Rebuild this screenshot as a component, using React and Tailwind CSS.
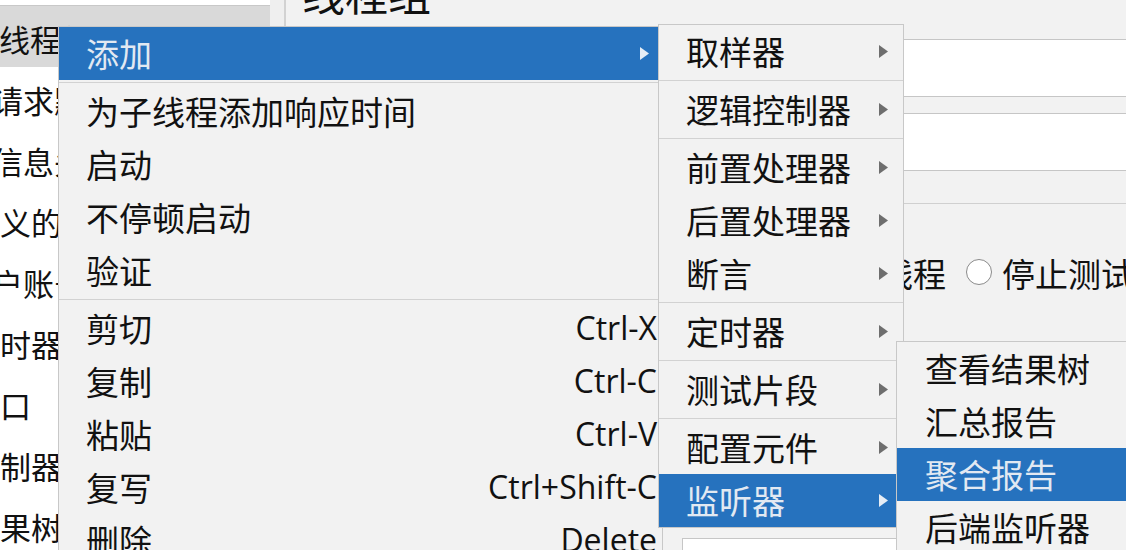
import React from "react";

const CJK = "font-['Noto_Sans_CJK_SC','Noto_Sans',sans-serif]";
const LAT = "font-['Open_Sans','Noto_Sans',sans-serif]";

function Arrow({ light }) {
  return (
    <svg width="9" height="13" viewBox="0 0 9 13" className="shrink-0">
      <polygon points="0,0 9,6.5 0,13" fill={light ? "#e6edf5" : "#6e6e6e"} />
    </svg>
  );
}

function Sep() {
  return (
    <div className="h-[5px] shrink-0 flex flex-col justify-center">
      <div className="h-px bg-[#d2d2d2]" />
    </div>
  );
}

function Row({ label, hl, arrow, shortcut, pl = "pl-[27px]", pr = "pr-[15px]" }) {
  return (
    <div
      className={`h-[53px] shrink-0 flex items-center justify-between ${pl} ${pr} ${
        hl ? "bg-[#2672be] text-[#e2e9f2]" : "text-[#111111]"
      }`}
    >
      <span className={`${CJK} text-[33px] leading-none whitespace-nowrap`}>{label}</span>
      {arrow && <Arrow light={hl} />}
      {shortcut && (
        <span className={`${LAT} text-[32px] leading-none whitespace-nowrap pb-[2px]`}>{shortcut}</span>
      )}
    </div>
  );
}

function TreeRow({ text, offset, selected }) {
  return (
    <div
      className={`h-[61px] shrink-0 flex items-center overflow-hidden ${
        selected ? "bg-[#d9d9d9]" : ""
      }`}
    >
      <span className={`${CJK} text-[31px] leading-none pt-[4px] whitespace-nowrap text-[#111111] ${offset}`}>
        {text}
      </span>
    </div>
  );
}

function Radio() {
  return <span className="w-[26px] h-[26px] rounded-full border-[1.5px] border-[#8a8a8a] bg-white shrink-0" />;
}

export default function App() {
  return (
    <div className="relative w-[1126px] h-[550px] overflow-hidden bg-[#f2f2f2]">
      {/* background window */}
      <div className="flex w-full h-full">
        {/* tree */}
        <div className="w-[270px] shrink-0 bg-white flex flex-col overflow-hidden">
          <div className="h-[5px] shrink-0" />
          <div className="h-px shrink-0 bg-[#c8c8c8]" />
          <TreeRow text="线程组" offset="ml-[-1px]" selected />
          <TreeRow text="请求默认值" offset="ml-[-8px]" />
          <TreeRow text="信息头管理器" offset="ml-[-8px]" />
          <TreeRow text="用户定义的变量" offset="ml-[-93px]" />
          <TreeRow text="用户账号" offset="ml-[-39px]" />
          <TreeRow text="固定定时器" offset="ml-[-93px]" />
          <TreeRow text="登录接口" offset="ml-[-93px]" />
          <TreeRow text="循环控制器" offset="ml-[-93px]" />
          <TreeRow text="查看结果树" offset="ml-[-93px]" />
        </div>
        {/* divider */}
        <div className="w-[14px] shrink-0 bg-[#efefef]" />
        <div className="w-[2px] shrink-0 bg-[#d2d2d2]" />
        {/* right panel */}
        <div className="flex-1 flex flex-col overflow-hidden bg-[#f2f2f2]">
          <div className={`${CJK} shrink-0 text-[43px] leading-[43px] h-[43px] mt-[-29px] ml-[16px] text-[#111111] whitespace-nowrap`}>
            线程组
          </div>
          <div className="shrink-0 mt-[25px] ml-[100px] h-[58px] w-[900px] bg-white border border-[#c6c6c6]" />
          <div className="shrink-0 mt-[16px] ml-[100px] h-[58px] w-[900px] bg-white border border-[#c6c6c6]" />
          <div className="shrink-0 mt-[32px] h-px w-full bg-[#d0d0d0]" />
          <div className={`shrink-0 mt-[48px] ml-[492px] h-[40px] flex items-center gap-[20px] ${CJK} text-[33px] leading-none text-[#111111] whitespace-nowrap`}>
            <div className="flex items-center gap-[10px]">
              <Radio />
              <span className="pt-[2px]">停止线程</span>
            </div>
            <div className="flex items-center gap-[10px]">
              <Radio />
              <span className="pt-[2px]">停止测试</span>
            </div>
            <div className="flex items-center gap-[10px]">
              <Radio />
              <span className="pt-[2px]">立即停止测试</span>
            </div>
          </div>
          <div className="shrink-0 mt-[246px] ml-[396px] h-[58px] w-[600px] bg-white border border-[#c6c6c6]" />
        </div>
      </div>

      {/* main popup menu */}
      <div className="absolute left-[58px] top-[26px] w-[605px] h-[560px] bg-[#f2f2f2] border border-[#c8c8c8] flex flex-col">
        <Row label="添加" hl arrow pr="pr-[13px]" />
        <Sep />
        <Row label="为子线程添加响应时间" />
        <Row label="启动" />
        <Row label="不停顿启动" />
        <Row label="验证" />
        <Sep />
        <Row label="剪切" shortcut="Ctrl-X" pr="pr-[5px]" />
        <Row label="复制" shortcut="Ctrl-C" pr="pr-[5px]" />
        <Row label="粘贴" shortcut="Ctrl-V" pr="pr-[5px]" />
        <Row label="复写" shortcut="Ctrl+Shift-C" pr="pr-[5px]" />
        <Row label="删除" shortcut="Delete" pr="pr-[5px]" />
      </div>

      {/* submenu: 添加 */}
      <div className="absolute left-[658px] top-[24px] w-[246px] bg-[#f2f2f2] border border-[#c8c8c8] flex flex-col">
        <Row label="取样器" arrow />
        <Sep />
        <Row label="逻辑控制器" arrow />
        <Sep />
        <Row label="前置处理器" arrow />
        <Row label="后置处理器" arrow />
        <Row label="断言" arrow />
        <Sep />
        <Row label="定时器" arrow />
        <Sep />
        <Row label="测试片段" arrow />
        <Sep />
        <Row label="配置元件" arrow />
        <Row label="监听器" hl arrow />
      </div>

      {/* submenu: 监听器 */}
      <div className="absolute left-[896px] top-[341px] w-[320px] h-[260px] bg-[#f2f2f2] border border-[#c8c8c8] flex flex-col">
        <Row label="查看结果树" pl="pl-[28px]" />
        <Row label="汇总报告" pl="pl-[28px]" />
        <Row label="聚合报告" hl pl="pl-[28px]" />
        <Row label="后端监听器" pl="pl-[28px]" />
      </div>
    </div>
  );
}
